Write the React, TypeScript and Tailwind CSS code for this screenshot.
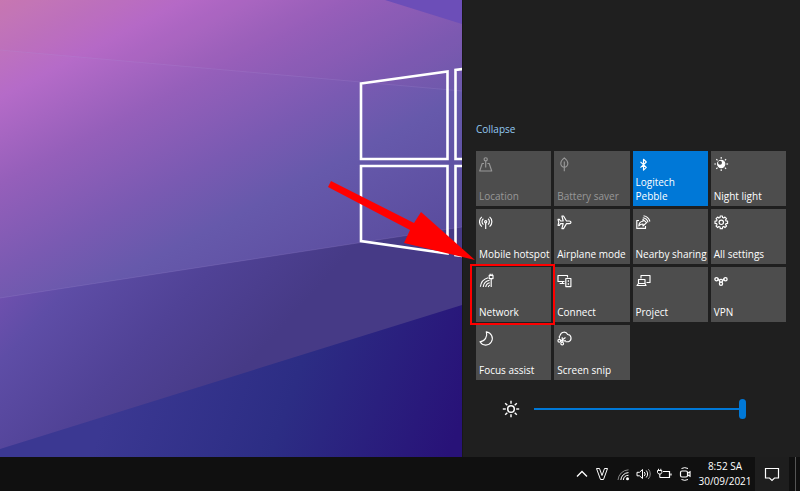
import type { ReactNode } from "react";
import clsx from "clsx";

// ── Types ─────────────────────────────────────────────────────────────────────

interface QuickAction {
  id: string;
  label: string;
  icon: ReactNode;
  state?: "on" | "disabled";
  highlighted?: boolean;
}

// ── Icons ─────────────────────────────────────────────────────────────────────

function TileIcon({ children }: { children: ReactNode }) {
  return (
    <svg
      viewBox="0 0 15 15"
      className="size-[15px] shrink-0"
      fill="none"
      stroke="currentColor"
      strokeWidth="1.15"
      strokeLinejoin="round"
      aria-hidden="true"
    >
      {children}
    </svg>
  );
}

function Rays({ cx, cy, from, to }: { cx: number; cy: number; from: number; to: number }) {
  return (
    <>
      {Array.from({ length: 8 }).map((_, i) => {
        const a = (i * Math.PI) / 4;
        return (
          <line
            key={i}
            x1={cx + Math.cos(a) * from}
            y1={cy + Math.sin(a) * from}
            x2={cx + Math.cos(a) * to}
            y2={cy + Math.sin(a) * to}
          />
        );
      })}
    </>
  );
}

// Eight-toothed gear outline
const GEAR_POINTS = Array.from({ length: 8 })
  .flatMap((_, i) =>
    [
      [-15, 4.9],
      [-10, 6.4],
      [10, 6.4],
      [15, 4.9],
    ].map(([offset, radius]) => {
      const a = ((i * 45 + offset) * Math.PI) / 180;
      return `${(7.3 + Math.cos(a) * radius).toFixed(2)},${(7.3 + Math.sin(a) * radius).toFixed(2)}`;
    })
  )
  .join(" ");

// ── Quick Actions ─────────────────────────────────────────────────────────────

const QUICK_ACTIONS: QuickAction[] = [
  {
    id: "location",
    label: "Location",
    state: "disabled",
    icon: (
      <TileIcon>
        <circle cx="6.7" cy="2.3" r="1.6" />
        <path d="M6.7 4v6.5M5 6.5H3.2L.7 14h12L10.2 6.5H8.4" />
      </TileIcon>
    ),
  },
  {
    id: "battery",
    label: "Battery saver",
    state: "disabled",
    icon: (
      <TileIcon>
        <path d="M7.3.9C9.6 2.6 10.8 4.4 10.8 6.6A3.5 3.5 0 0 1 7.3 10.2 3.5 3.5 0 0 1 3.8 6.6C3.8 4.4 5 2.6 7.3.9ZM7.3 4.5V14.3" />
      </TileIcon>
    ),
  },
  {
    id: "bluetooth",
    label: "Logitech Pebble",
    state: "on",
    icon: (
      <TileIcon>
        <path d="M4.5 4.8 10.3 10.4 7.5 13.2V2.2L10.3 5 4.5 10.6" />
      </TileIcon>
    ),
  },
  {
    id: "night-light",
    label: "Night light",
    icon: (
      <TileIcon>
        <circle cx="7.2" cy="7" r="3.6" fill="currentColor" />
        <circle cx="6" cy="5.8" r="2" fill="#4d4d4d" stroke="none" />
        <Rays cx={7.2} cy={7} from={5.2} to={6.9} />
      </TileIcon>
    ),
  },
  {
    id: "hotspot",
    label: "Mobile hotspot",
    icon: (
      <TileIcon>
        <circle cx="6.7" cy="6.7" r="1.1" />
        <path d="M6.7 7.8V14M4.4 9.6A3.7 3.7 0 0 1 4.4 3.8M9 3.8A3.7 3.7 0 0 1 9 9.6M2.8 11.6A6.3 6.3 0 0 1 2.8 1.9M10.6 1.9A6.3 6.3 0 0 1 10.6 11.6" />
      </TileIcon>
    ),
  },
  {
    id: "airplane",
    label: "Airplane mode",
    icon: (
      <TileIcon>
        <path d="M14 7.3C14 6.5 13.2 6 12.2 6H9.5L6.5 1H4.9L6.2 6H3.6L2.4 4.3H1L1.8 7.3 1 10.3H2.4L3.6 8.6H6.2L4.9 13.6H6.5L9.5 8.6H12.2C13.2 8.6 14 8.1 14 7.3Z" />
      </TileIcon>
    ),
  },
  {
    id: "nearby",
    label: "Nearby sharing",
    icon: (
      <TileIcon>
        <path d="M3 5.5H.8V13.4H9.5V11" />
        <path d="M2.8 11C3 8 4.5 6.3 7 6.2V4.3L10.6 7.7 7 11V9C5.2 8.9 3.9 9.5 2.8 11Z" />
        <path d="M6.8 2.7A6 6 0 0 1 12 7.3M7.5.8A8 8 0 0 1 13.9 6.5" />
      </TileIcon>
    ),
  },
  {
    id: "settings",
    label: "All settings",
    icon: (
      <TileIcon>
        <polygon points={GEAR_POINTS} />
        <circle cx="7.3" cy="7.3" r="2.2" />
      </TileIcon>
    ),
  },
  {
    id: "network",
    label: "Network",
    highlighted: true,
    icon: (
      <TileIcon>
        <path d="M1.4 13.8A10.6 10.6 0 0 1 9 4.7M4.2 14A7.8 7.8 0 0 1 10.6 7.3M6.7 14A5.2 5.2 0 0 1 10.8 9.7M9.2 14A2.8 2.8 0 0 1 11 12" />
        <path d="M12.2 6V14M10.2 2.3H14V5.6H10.2ZM11.2 2.3V.8M13.1 2.3V.8" />
      </TileIcon>
    ),
  },
  {
    id: "connect",
    label: "Connect",
    icon: (
      <TileIcon>
        <path d="M7.5 8.5H1V2.5H10.5V4.5M2.6 10.5H7.5M5.5 8.5V10.5" />
        <path d="M8.8 5.5H13.9V13.6H8.8Z" />
        <path d="M10.7 8H12M10.7 11H12" strokeWidth="1.5" />
      </TileIcon>
    ),
  },
  {
    id: "project",
    label: "Project",
    icon: (
      <TileIcon>
        <path d="M5 5.5V2.5H14V9.5H10.5" />
        <path d="M2.5 10.5V6.5H9V10.5L10 12.5H1L2.5 10.5H9" />
      </TileIcon>
    ),
  },
  {
    id: "vpn",
    label: "VPN",
    icon: (
      <TileIcon>
        <g strokeWidth="1.3">
          <circle cx="2.5" cy="6.2" r="1.6" />
          <circle cx="11.5" cy="6.2" r="1.6" />
          <circle cx="7" cy="10.8" r="1.6" />
          <path d="M4 5.6 6.3 9.3M10 5.6 7.7 9.3M5.2 7.2 7 6.2 8.8 7.2" />
        </g>
      </TileIcon>
    ),
  },
  {
    id: "focus",
    label: "Focus assist",
    icon: (
      <TileIcon>
        <path d="M7.3.9A6.6 6.6 0 1 1 1 10.8 7.4 7.4 0 0 0 7.3.9Z" />
      </TileIcon>
    ),
  },
  {
    id: "snip",
    label: "Screen snip",
    icon: (
      <TileIcon>
        <path d="M2.5 7.5A3 3 0 0 1 3.2 4.2 4 4 0 0 1 10.7 3.5 3.7 3.7 0 0 1 11.5 10.7H8.5" />
        <circle cx="2.3" cy="9.8" r="1.4" />
        <circle cx="5.2" cy="12.6" r="1.4" />
        <path d="M3.7 9.8H9M5.2 11.2V6.2M3.5 10.2 8.5 6.5" />
      </TileIcon>
    ),
  },
];

// ── Wallpaper ─────────────────────────────────────────────────────────────────

function Wallpaper() {
  return (
    <svg
      viewBox="0 0 462 457"
      preserveAspectRatio="xMaxYMax slice"
      className="absolute inset-0 size-full"
      aria-hidden="true"
    >
      <defs>
        <linearGradient id="sky" gradientUnits="userSpaceOnUse" x1="0" y1="0" x2="200" y2="380">
          <stop offset="0" stopColor="#c87ab2" />
          <stop offset="0.2" stopColor="#b56bc8" />
          <stop offset="0.38" stopColor="#955fba" />
          <stop offset="0.56" stopColor="#7a5ab2" />
          <stop offset="0.7" stopColor="#6659ab" />
          <stop offset="1" stopColor="#584a9c" />
        </linearGradient>
        <linearGradient id="band" gradientUnits="userSpaceOnUse" x1="0" y1="295" x2="170" y2="450">
          <stop offset="0" stopColor="#6f50ae" />
          <stop offset="0.2" stopColor="#5e4da6" />
          <stop offset="0.6" stopColor="#504296" />
          <stop offset="1" stopColor="#463a86" />
        </linearGradient>
        <linearGradient id="floor" gradientUnits="userSpaceOnUse" x1="110" y1="400" x2="430" y2="510">
          <stop offset="0" stopColor="#3b3892" />
          <stop offset="0.5" stopColor="#2c2d84" />
          <stop offset="1" stopColor="#281278" />
        </linearGradient>
      </defs>
      <rect width="462" height="457" fill="url(#sky)" />
      <polygon points="0,50 462,91 462,0 0,0" fill="#c050b0" opacity="0.06" />
      <polygon points="385,0 462,0 462,24" fill="#6c4eb8" />
      <polygon points="0,298 462,227 462,457 0,457" fill="url(#band)" />
      <polygon points="0,449 462,305 462,457 0,457" fill="url(#floor)" />
      <path d="M0 50 462 91M0 298 462 227" stroke="#b49ae0" strokeOpacity="0.18" />
      <g fill="none" stroke="#fff" strokeWidth="2.6">
        <path d="M361 83.5 447.5 71.5V159H361ZM361 166H447.5V253.5L361 241ZM470 68 455.5 70V159H470M470 166H455.5V255L470 257" />
      </g>
    </svg>
  );
}

// ── Action Tile ───────────────────────────────────────────────────────────────

function ActionTile({ action }: { action: QuickAction }) {
  return (
    <div className="relative">
      <button
        type="button"
        disabled={action.state === "disabled"}
        aria-pressed={action.state === "on"}
        className={clsx(
          "flex h-[55px] w-full flex-col items-start justify-between px-[3px] pt-[6px] pb-[3px] text-left",
          action.state === "on" ? "bg-[#0078d7]" : "bg-[#4d4d4d]",
          action.state === "disabled" ? "text-[#989898]" : "text-white"
        )}
      >
        {action.icon}
        <span className={action.state === "on" ? "-mt-1 w-12" : "whitespace-nowrap"}>{action.label}</span>
      </button>

      {/* Callout frame and arrow */}
      {action.highlighted && (
        <>
          <span className="pointer-events-none absolute -top-[3px] -right-1 -bottom-[3px] -left-[6px] z-10 border-2 border-[#f00]" />
          <svg
            viewBox="0 0 148 80"
            className="pointer-events-none absolute right-full bottom-full z-10 mb-[6px] h-20 w-[148px]"
            fill="#f00"
            aria-hidden="true"
          >
            <polygon points="3,0 86,42 93,31 147,79 76,62 82,49 0,6" />
          </svg>
        </>
      )}
    </div>
  );
}

// ── Action Center ─────────────────────────────────────────────────────────────

function ActionCenter() {
  return (
    <aside
      className="relative flex w-[338px] shrink-0 flex-col justify-end border-l border-[#181818] bg-[#1f1f1f] pr-[14px] pb-[38px] pl-[13px] text-[10px] leading-[14px]"
      aria-label="Action center"
    >
      <button type="button" className="mb-[15px] self-start text-[#93c9f3]">
        Collapse
      </button>

      <div className="grid grid-cols-4 gap-[3px]">
        {QUICK_ACTIONS.map((action) => (
          <ActionTile key={action.id} action={action} />
        ))}
      </div>

      {/* Brightness */}
      <label className="mt-[19px] flex h-5 items-center gap-[14px] pr-10 pl-[26px] text-white">
        <svg viewBox="0 0 18 18" className="size-[18px] shrink-0" fill="none" stroke="currentColor" aria-hidden="true">
          <circle cx="9" cy="9" r="3.3" strokeWidth="1.5" />
          <g strokeWidth="1.4">
            <Rays cx={9} cy={9} from={5.2} to={8.2} />
          </g>
        </svg>
        <input
          type="range"
          aria-label="Brightness"
          defaultValue={100}
          className="h-5 min-w-0 flex-1 appearance-none bg-transparent [&::-webkit-slider-runnable-track]:h-[2px] [&::-webkit-slider-runnable-track]:bg-[#0078d7] [&::-webkit-slider-thumb]:-mt-[9px] [&::-webkit-slider-thumb]:h-5 [&::-webkit-slider-thumb]:w-[7px] [&::-webkit-slider-thumb]:appearance-none [&::-webkit-slider-thumb]:rounded-full [&::-webkit-slider-thumb]:bg-[#0078d7]"
        />
      </label>
    </aside>
  );
}

// ── Taskbar ───────────────────────────────────────────────────────────────────

const TRAY_ICONS: { label: string; drawing: ReactNode }[] = [
  { label: "Show hidden icons", drawing: <path d="M5 10.5 10 5.5 15 10.5" strokeWidth="1.3" /> },
  {
    label: "Unikey",
    drawing: <path d="M3.5 2.5H6.5L9 9.5 11.5 2.5H14.5L10.5 13.5H7.5Z" />,
  },
  {
    label: "Wi-Fi",
    drawing: (
      <>
        <path d="M4 14A11 11 0 0 1 14.5 3.8" stroke="#888" />
        <path d="M6.8 14A8 8 0 0 1 14.5 6.6M9.3 14A5.300 5.300 0 0 1 14.5 9.3" />
        <circle cx="13.5" cy="12.8" r="1.500" fill="currentColor" stroke="none" />
      </>
    ),
  },
  {
    label: "Volume",
    drawing: (
      <>
        <path d="M2 6.300H4.5L7.5 3.500V12.500L4.500 9.800H2ZM9.300 6A3 3 0 0 1 9.300 10.100M11.200 4.500A5 5 0 0 1 11.200 11.500" />
        <path d="M13.200 3A7 7 0 0 1 13.200 13" stroke="#888" />
      </>
    ),
  },
  {
    label: "Battery",
    drawing: (
      <>
        <path d="M7 5.500H13.500V11.500H6M15 7.500V9.500" strokeWidth="1.200" />
        <path d="M1.500 4.500H5.800V6.500L4.800 8H2.700L1.500 6.500ZM2.500 4.500V2.800M4.800 4.500V2.800M3.800 8V11.500H6" />
      </>
    ),
  },
  {
    label: "Meet now",
    drawing: (
      <>
        <rect x="3.500" y="5" width="7" height="6" rx="1.500" strokeWidth="1.200" />
        <path d="M10.500 7.200 13 5.800V10.200L10.500 8.800" strokeWidth="1.200" />
        <path d="M4.500 2.500A7 7 0 0 1 11 2.500M4.500 13.500A7 7 0 0 0 11 13.500" />
      </>
    ),
  },
];

function Taskbar() {
  return (
    <footer className="flex h-[34px] shrink-0 items-stretch justify-end bg-[#101010] text-white">
      <div className="flex items-center gap-[5px] pr-[5px]">
        {TRAY_ICONS.map((item) => (
          <button key={item.label} type="button" aria-label={item.label}>
            <svg viewBox="0 0 16 16" className="size-4" fill="none" stroke="currentColor" aria-hidden="true">
              {item.drawing}
            </svg>
          </button>
        ))}
      </div>
      <time className="flex w-[54px] flex-col items-center justify-center text-[10px] leading-[15px]">
        <span>8:52 SA</span>
        <span>30/09/2021</span>
      </time>
      <button
        type="button"
        aria-label="Notifications"
        className="ml-[3px] flex w-[34px] items-center justify-center bg-[#1e1e1e]"
      >
        <svg viewBox="0 0 16 16" className="size-4" fill="none" stroke="currentColor" strokeWidth="1.200" aria-hidden="true">
          <path d="M1.500 2.500H14.500V12H10.500L8 14.500 5.500 12H1.500Z" />
        </svg>
      </button>
      <button type="button" aria-label="Show desktop" className="ml-[6px] w-[5px] border-l border-[#555]" />
    </footer>
  );
}

// ── App ───────────────────────────────────────────────────────────────────────

export default function App() {
  return (
    <div className="flex min-h-screen flex-col overflow-hidden bg-[#101010] font-['Open_Sans','Noto_Sans',sans-serif]">
      <main className="flex flex-1">
        <div className="relative flex-1">
          <Wallpaper />
        </div>
        <ActionCenter />
      </main>
      <Taskbar />
    </div>
  );
}
